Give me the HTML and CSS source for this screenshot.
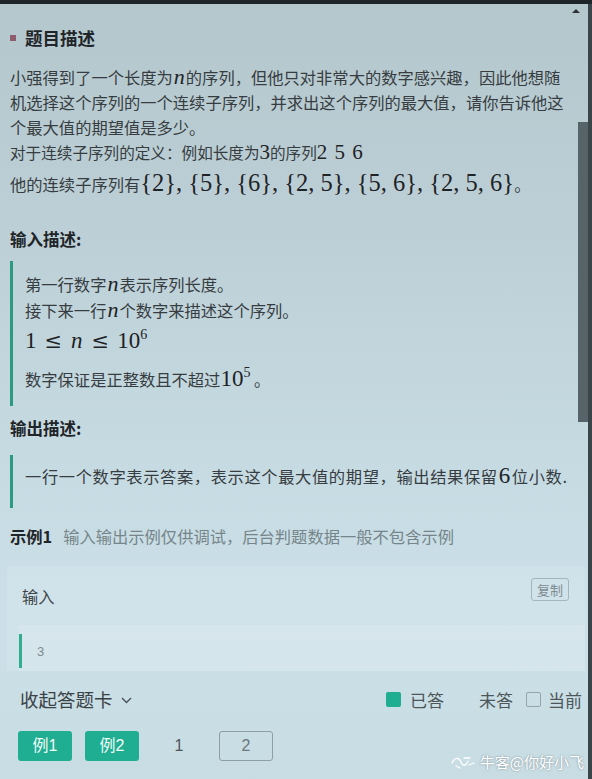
FILE: index.html
```html
<!DOCTYPE html>
<html lang="zh-CN">
<head>
<meta charset="utf-8">
<title>题目描述</title>
<link rel="stylesheet" href="styles.css">
</head>
<body>
<div class="screen">
  <div class="main">
    <h2 class="title"><span class="mark"></span>题目描述</h2>
    <div class="desc">
      <p class="line">小强得到了一个长度为<span class="mi">n</span>的序列，但他只对非常大的数字感兴趣，因此他想随</p>
      <p class="line">机选择这个序列的一个连续子序列，并求出这个序列的最大值，请你告诉他这</p>
      <p class="line">个最大值的期望值是多少。</p>
      <p class="line small">对于连续子序列的定义：例如长度为<span class="mn">3</span>的序列<span class="mn seq">2 5 6</span></p>
      <p class="line tall">他的连续子序列有<span class="sets">{2}, {5}, {6}, {2, 5}, {5, 6}, {2, 5, 6}</span>。</p>
    </div>

    <h3 class="sub">输入描述:</h3>
    <div class="quote">
      <p class="line">第一行数字<span class="mi">n</span>表示序列长度。</p>
      <p class="line">接下来一行<span class="mi">n</span>个数字来描述这个序列。</p>
      <p class="line mathline"><span class="mn">1</span><span class="rel">≤</span><span class="mi">n</span><span class="rel">≤</span><span class="mn">10<sup>6</sup></span></p>
      <p class="line bigline">数字保证是正整数且不超过<span class="mn">10<sup>5</sup></span> 。</p>
    </div>

    <h3 class="sub sub2">输出描述:</h3>
    <div class="quote quote2">
      <p class="line wide">一行一个数字表示答案，表示这个最大值的期望，输出结果保留<span class="mn">6</span>位小数.</p>
    </div>

    <div class="ex-title"><span class="ex-name">示例1</span><span class="ex-note">输入输出示例仅供调试，后台判题数据一般不包含示例</span></div>

    <div class="ex-box">
      <div class="ex-head">
        <span class="ex-label">输入</span>
        <span class="copy">复制</span>
      </div>
      <div class="ex-code"><span>3</span></div>
    </div>
  </div>

  <div class="footer">
    <div class="foot-row">
      <div class="collapse">收起答题卡<svg class="chev" width="11" height="7" viewBox="0 0 11 7"><path d="M1 1 L5.5 5.5 L10 1" fill="none" stroke="#4a5357" stroke-width="1.4"/></svg></div>
      <div class="legend">
        <span class="sq sq-done"></span><span class="lg lg1">已答</span>
        <span class="lg lg2">未答</span>
        <span class="sq sq-cur"></span><span class="lg lg3">当前</span>
      </div>
    </div>
    <div class="cards">
      <span class="card on">例1</span>
      <span class="card on">例2</span>
      <span class="card">1</span>
      <span class="card cur">2</span>
    </div>
  </div>

  <div class="scrollbar">
    <div class="arrow"></div>
    <div class="thumb"></div>
  </div>

  <div class="watermark">
    <svg width="26" height="16" viewBox="0 0 26 16"><path d="M2 9 C5 3 9 3 11 8 C13 13 16 12 18 7 M14 4 L20 4 M19 11 L24 9 M6 12 L10 14" fill="none" stroke="#ffffff" stroke-width="1.3" stroke-linecap="round"/></svg>
    <span>牛客@你好小飞</span>
  </div>
</div>
</body>
</html>
```

FILE: styles.css
```css
html, body {
  margin: 0;
  padding: 0;
}
body {
  width: 592px;
  height: 779px;
  overflow: hidden;
  font-family: "Noto Sans CJK SC", "Noto Sans", sans-serif;
  color: #363c3f;
}
.screen {
  position: relative;
  width: 592px;
  height: 779px;
  box-sizing: border-box;
  border-top: 4px solid #1f2629;
  background: linear-gradient(180deg, #b4c7cd 0%, #bccfd6 28%, #c5d9e1 55%, #cbe0e8 80%, #c8dce3 100%);
  overflow: hidden;
}
.main {
  padding: 0 14px 0 10px;
}
p { margin: 0; }
.title {
  margin: 22px 0 14px;
  font-size: 17.5px;
  line-height: 24px;
  font-weight: 700;
  color: #1f2528;
  display: flex;
  align-items: center;
}
.mark {
  width: 6px;
  height: 6px;
  background: #8e5d6d;
  margin-right: 9px;
}
.line {
  font-size: 16.3px;
  line-height: 25px;
  white-space: nowrap;
}
.small {
  font-size: 15.6px;
}
.tall {
  line-height: 36px;
  height: 36px;
}
.mi {
  font-family: "Liberation Serif", "DejaVu Serif", serif;
  font-style: italic;
  font-size: 22px;
  color: #1e2326;
  padding: 0 1px;
}
.mn {
  font-family: "Liberation Serif", "DejaVu Serif", serif;
  font-size: 21px;
  color: #1e2326;
}
.mn sup {
  font-size: 14px;
  vertical-align: 9px;
  line-height: 0;
}
.seq {
  word-spacing: 2px;
}
.sets {
  font-family: "Liberation Serif", "DejaVu Serif", serif;
  font-size: 24.5px;
  color: #1e2326;
}
.sub {
  margin: 26px 0 0;
  font-size: 16.5px;
  line-height: 24px;
  font-weight: 700;
  color: #1f2528;
}
.sub2 {
  margin-top: 10px;
}
.quote {
  margin-top: 10px;
  border-left: 3px solid #2a9a80;
  padding: 10px 0 11px 12px;
}
.mathline {
  line-height: 30px;
  height: 30px;
  font-size: 22px;
}
.mathline .mn, .mathline .mi {
  font-size: 23px;
}
.rel {
  font-family: "DejaVu Serif", serif;
  font-size: 21px;
  margin: 0 8px;
  color: #1e2326;
}
.bigline {
  margin-top: 10px;
  line-height: 32px;
  height: 32px;
}
.bigline .mn {
  font-size: 23px;
}
.quote2 {
  margin-top: 15px;
  padding: 8px 0 19px 12px;
}
.quote2 .line {
  line-height: 26px;
}
.wide {
  letter-spacing: 0.6px;
}
.wide .mn {
  font-size: 23px;
  margin: 0 1px;
}
.ex-title {
  margin-top: 16px;
  line-height: 24px;
  font-size: 16.3px;
  white-space: nowrap;
}
.ex-name {
  font-weight: 700;
  color: #1f2528;
}
.ex-note {
  margin-left: 11px;
  color: #76858a;
}
.ex-box {
  margin: 18px -7px 0 -3px;
  background: rgba(255, 255, 255, 0.12);
}
.ex-head {
  height: 59px;
  box-sizing: border-box;
  padding: 12px 16px 0 15px;
  display: flex;
  justify-content: space-between;
  align-items: flex-start;
}
.ex-label {
  margin-top: 6px;
  font-size: 16.3px;
  line-height: 24px;
  color: #3d4548;
}
.copy {
  width: 36px;
  height: 21px;
  border: 1px solid #a5b5ba;
  border-radius: 3px;
  font-size: 13px;
  line-height: 21px;
  text-align: center;
  color: #7f8d92;
}
.ex-code {
  margin-left: 12px;
  height: 46px;
  background: rgba(255, 255, 255, 0.12);
  display: flex;
  align-items: center;
  padding-top: 6px;
  box-sizing: border-box;
}
.ex-code::before {
  content: "";
  width: 3px;
  height: 34px;
  background: #2fae90;
}
.ex-code span {
  margin-left: 15px;
  font-family: "Liberation Sans", sans-serif;
  font-size: 13px;
  color: #7e8c90;
}
.footer {
  padding: 15px 10px 0 20px;
}
.foot-row {
  display: flex;
  justify-content: space-between;
  align-items: center;
  height: 26px;
}
.collapse {
  font-size: 18.5px;
  color: #3a4245;
  display: flex;
  align-items: center;
}
.chev {
  margin-left: 8px;
  margin-top: 2px;
}
.legend {
  display: flex;
  align-items: center;
  font-size: 17px;
  color: #4d5659;
}
.sq {
  width: 15px;
  height: 15px;
  box-sizing: border-box;
  border-radius: 2px;
}
.sq-done {
  background: #1fae92;
}
.sq-cur {
  border: 1.5px solid #93a5aa;
  margin-left: 13px;
}
.lg1 { margin-left: 9px; }
.lg2 { margin-left: 35px; }
.lg3 { margin-left: 7px; }
.cards {
  margin-top: 19px;
  margin-left: -2px;
  display: flex;
  gap: 13px;
}
.card {
  width: 54px;
  height: 30px;
  box-sizing: border-box;
  border-radius: 3px;
  font-family: "Liberation Sans", "Noto Sans CJK SC", sans-serif;
  font-size: 16px;
  line-height: 30px;
  text-align: center;
  color: #4d5659;
}
.card.on {
  background: #1fae92;
  color: #f2fbf8;
}
.card.cur {
  border: 1px solid #8e9fa4;
  line-height: 28px;
  color: #6a777b;
}
.scrollbar {
  position: absolute;
  top: 0;
  right: 0;
  width: 14px;
  height: 100%;
  border-right: 4px solid #3a4549;
  box-sizing: border-box;
}
.arrow {
  position: absolute;
  top: 5px;
  left: -6px;
  width: 0;
  height: 0;
  border-left: 4px solid transparent;
  border-right: 4px solid transparent;
  border-bottom: 4px solid #2c3336;
}
.thumb {
  position: absolute;
  top: 118px;
  left: 0;
  width: 10px;
  height: 300px;
  background: #56646a;
}
.watermark {
  position: absolute;
  right: 8px;
  bottom: 7px;
  display: flex;
  align-items: center;
  gap: 4px;
  font-size: 15px;
  color: #ffffff;
  text-shadow: 0 0 2px rgba(60, 70, 75, 0.6);
}
```
